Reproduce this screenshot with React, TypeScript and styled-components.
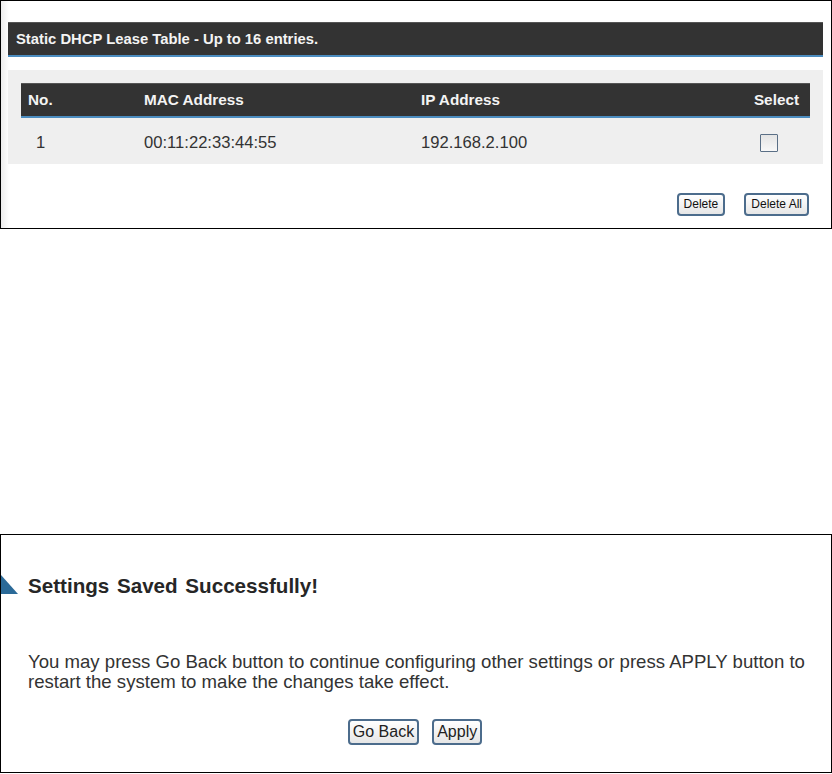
import styled, { createGlobalStyle } from 'styled-components';

const GlobalStyle = createGlobalStyle`
  html, body {
    margin: 0;
    padding: 0;
    background: #fff;
  }
  body {
    font-family: "Liberation Sans", Arial, sans-serif;
  }
`;

export default function App() {
  return (
    <>
      <GlobalStyle />
      <Page>
        <LeasePanel>
          <TitleBar>Static DHCP Lease Table - Up to 16 entries.</TitleBar>
          <TableArea>
            <LeaseTable>
              <thead>
                <tr>
                  <HeadCell $width="116px">No.</HeadCell>
                  <HeadCell $width="277px">MAC Address</HeadCell>
                  <HeadCell>IP Address</HeadCell>
                  <HeadCell $width="120px" $align="right">Select</HeadCell>
                </tr>
              </thead>
              <tbody>
                <tr>
                  <BodyCell $indent="15px">1</BodyCell>
                  <BodyCell>00:11:22:33:44:55</BodyCell>
                  <BodyCell>192.168.2.100</BodyCell>
                  <BodyCell $align="right">
                    <CheckBox type="checkbox" />
                  </BodyCell>
                </tr>
              </tbody>
            </LeaseTable>
          </TableArea>
          <ButtonRow>
            <SmallButton>Delete</SmallButton>
            <SmallButton>Delete All</SmallButton>
          </ButtonRow>
        </LeasePanel>

        <SavedPanel>
          <SavedTitle>
            <svg width="17" height="19" viewBox="0 0 17 19">
              <polygon points="0,0 17,19 0,19" fill="#2b6a98" />
            </svg>
            <span>Settings Saved Successfully!</span>
          </SavedTitle>
          <Message>
            You may press Go Back button to continue configuring other settings or press APPLY button to
            restart the system to make the changes take effect.
          </Message>
          <CenterRow>
            <BigButton>Go Back</BigButton>
            <BigButton>Apply</BigButton>
          </CenterRow>
        </SavedPanel>
      </Page>
    </>
  );
}

const Page = styled.div`
  width: 832px;
  display: flex;
  flex-direction: column;
`;

const LeasePanel = styled.section`
  box-sizing: border-box;
  height: 229px;
  border: 1px solid #000;
  padding: 21px 8px 0 7px;
  background: linear-gradient(to right, #ececec, #fff 8px);
`;

const TitleBar = styled.div`
  height: 35px;
  box-sizing: border-box;
  background: #333;
  border-top: 1px solid #555;
  border-bottom: 2px solid #4b8cbf;
  color: #f4f4f4;
  font-weight: bold;
  font-size: 14.8px;
  line-height: 32px;
  padding-left: 8px;
`;

const TableArea = styled.div`
  margin-top: 13px;
  background: #efefef;
  padding: 13px 13px 0 13px;
`;

const LeaseTable = styled.table`
  width: 100%;
  table-layout: fixed;
  border-collapse: collapse;
  thead tr {
    background: #333;
    border-bottom: 2px solid #4b8cbf;
  }
  tbody tr {
    height: 47px;
  }
`;

const HeadCell = styled.th<{ $width?: string; $align?: string }>`
  box-sizing: border-box;
  width: ${(p) => p.$width ?? 'auto'};
  height: 33px;
  padding: 0 11px 0 7px;
  text-align: ${(p) => p.$align ?? 'left'};
  color: #f4f4f4;
  font-size: 15.3px;
  font-weight: bold;
  border-top: 1px solid #555;
`;

const BodyCell = styled.td<{ $indent?: string; $align?: string }>`
  padding: 5px 32px 0 ${(p) => p.$indent ?? '7px'};
  text-align: ${(p) => p.$align ?? 'left'};
  color: #333;
  font-size: 16.6px;
`;

const CheckBox = styled.input`
  appearance: none;
  width: 18px;
  height: 18px;
  margin: 4px 0 0 0;
  border: 1px solid #5a6f86;
  border-radius: 1px;
  background: linear-gradient(#e4e4e4, #f8f8f8);
`;

const ButtonRow = styled.div`
  display: flex;
  justify-content: flex-end;
  gap: 19px;
  padding: 29px 14px 0 0;
`;

const SmallButton = styled.button`
  height: 23px;
  padding: 0 5px;
  border: 2px solid #4c6c8c;
  border-radius: 4px;
  background: linear-gradient(#ffffff, #e6e6e6);
  font-family: "Liberation Sans", Arial, sans-serif;
  font-size: 12px;
  color: #111;
`;

const SavedPanel = styled.section`
  box-sizing: border-box;
  margin-top: 305px;
  height: 239px;
  border: 1px solid #000;
  padding: 40px 0 0 0;
  display: flex;
  flex-direction: column;
`;

const SavedTitle = styled.h2`
  margin: 0;
  display: flex;
  align-items: flex-end;
  gap: 10px;
  font-size: 20.6px;
  font-weight: bold;
  color: #262626;
  svg {
    flex: none;
    margin-bottom: 3px;
  }
  span {
    line-height: 22px;
    word-spacing: 2px;
  }
`;

const Message = styled.p`
  margin: 55px 0 0 27px;
  font-size: 18.6px;
  line-height: 20px;
  color: #333;
  width: 795px;
`;

const CenterRow = styled.div`
  display: flex;
  justify-content: center;
  gap: 13px;
  margin-top: 27px;
  padding-right: 2px;
`;

const BigButton = styled.button`
  height: 26px;
  padding: 0 3px;
  border: 2px solid #4c6c8c;
  border-radius: 4px;
  background: linear-gradient(#ffffff, #e6e6e6);
  font-family: "Liberation Sans", Arial, sans-serif;
  font-size: 16px;
  color: #222;
`;
